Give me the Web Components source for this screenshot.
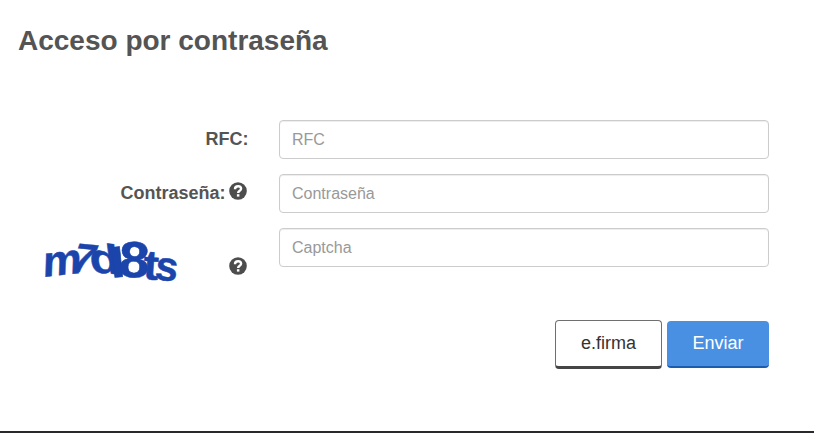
<!DOCTYPE html>
<html lang="es">
<head>
<meta charset="utf-8">
<title>Acceso por contraseña</title>
<style>
  body {
    margin: 0;
    background: #fff;
    color: #545454;
    font-family: "Liberation Sans", Arial, sans-serif;
  }
</style>
</head>
<body>
<login-panel></login-panel>
<script>
class HelpIcon extends HTMLElement {
  constructor() {
    super();
    this.attachShadow({ mode: "open" });
  }

  connectedCallback() {
    this.shadowRoot.innerHTML = `
      <style>
        :host { display: block; width: 18px; height: 18px; }
        svg { display: block; }
      </style>
      <svg width="18" height="18" viewBox="0 0 18 18" aria-hidden="true">
        <circle cx="9" cy="9" r="8.8" fill="#4d4d4d"/>
        <path d="M6 7.2C6 5.2 7.2 4.2 9.1 4.2S12.1 5.2 12.1 6.8C12.1 8.9 9.1 8.7 9.1 11.1" fill="none" stroke="#fff" stroke-width="2.4"/>
        <rect x="7.9" y="12.2" width="2.5" height="2.4" fill="#fff"/>
      </svg>
    `;
  }
}

class CaptchaPicture extends HTMLElement {
  constructor() {
    super();
    this.attachShadow({ mode: "open" });
  }

  connectedCallback() {
    this.shadowRoot.innerHTML = `
      <style>
        :host { display: block; width: 160px; height: 65px; }
        svg { display: block; }
        text { font-family: "Liberation Sans", Arial, sans-serif; font-weight: bold; fill: #1b45ab; stroke: #1b45ab; stroke-width: .5; }
      </style>
      <svg width="160" height="65" viewBox="0 0 160 65">
        <text transform="translate(12.5 51) rotate(-6) skewX(-8) scale(1.02 1)" font-size="43">m</text>
        <text transform="translate(38 45) rotate(5) skewX(-15) scale(.98 1)" font-size="41">7</text>
        <text transform="translate(61 46) rotate(5) skewX(12) scale(1.2 1)" font-size="41">d</text>
        <text transform="translate(81 52) rotate(-6) scale(1.35 1)" font-size="42" stroke-width="3">l</text>
        <text transform="translate(88 50.5) rotate(3) scale(1.08 1)" font-size="51" stroke-width="1">8</text>
        <text transform="translate(112.5 53) rotate(4) scale(1.1 1)" font-size="42" stroke-width="1">t</text>
        <text transform="translate(124 53) rotate(7)" font-size="41" stroke-width="1">s</text>
      </svg>
    `;
  }
}

class FormRow extends HTMLElement {
  constructor() {
    super();
    this.attachShadow({ mode: "open" });
  }

  connectedCallback() {
    const placeholder = this.getAttribute("placeholder") || "";
    const type = this.getAttribute("type") || "text";

    this.shadowRoot.innerHTML = `
      <style>
        :host {
          display: grid;
          grid-template-columns: 248.5px 490px;
          column-gap: 30.5px;
          height: 39px;
          margin-bottom: 15px;
        }
        .label {
          display: flex;
          justify-content: flex-end;
          height: 38px;
          align-items: center;
          font-size: 18px;
          font-weight: bold;
        }
        input {
          box-sizing: border-box;
          width: 490px;
          height: 39px;
          margin: 0;
          padding: 6px 12px;
          border: 1px solid #ccc;
          border-radius: 4px;
          box-shadow: inset 0 1px 1px rgba(0, 0, 0, .075);
          background: #fff;
          font: 16px "Liberation Sans", Arial, sans-serif;
        }
        input::placeholder { color: #999; opacity: 1; }
      </style>
      <div class="label"><slot></slot></div>
      <input type="${type}" placeholder="${placeholder}">
    `;
  }
}

class FormButton extends HTMLElement {
  constructor() {
    super();
    this.attachShadow({ mode: "open" });
  }

  connectedCallback() {
    this.shadowRoot.innerHTML = `
      <style>
        :host { display: block; }
        button {
          display: block;
          box-sizing: border-box;
          width: 107px;
          height: 49px;
          padding: 0 0 1px;
          border: 1px solid #6f6f6f;
          border-bottom: 3px solid #454545;
          border-radius: 4px;
          background: #fff;
          color: #333;
          font: 18px "Liberation Sans", Arial, sans-serif;
        }
        :host([primary]) button {
          width: 102px;
          height: 47px;
          border: 0;
          border-bottom: 2px solid #1b5cae;
          background: #4a90e2;
          color: #fff;
        }
      </style>
      <button type="button"><slot></slot></button>
    `;
  }
}

class LoginPanel extends HTMLElement {
  constructor() {
    super();
    this.attachShadow({ mode: "open" });
  }

  connectedCallback() {
    this.shadowRoot.innerHTML = `
      <style>
        :host {
          display: flex;
          flex-direction: column;
          box-sizing: border-box;
          height: 433px;
          overflow: hidden;
          border-bottom: 2px solid #29292b;
        }
        h1 {
          margin: 0;
          padding: 24px 0 0 18px;
          height: 96px;
          font-size: 28px;
          line-height: 33px;
          font-weight: bold;
          box-sizing: content-box;
        }
        form { margin: 0; }
        captcha-picture { flex: none; margin: 23px 39px 0 0; }
        help-icon { margin: -4px 2px 0 3px; }
        .captcha-help { margin: 37px 2px 0 0; }
        .buttons {
          display: flex;
          align-items: center;
          justify-content: flex-end;
          gap: 5px;
          padding: 38px 45px 0 0;
        }
      </style>
      <h1>Acceso por contraseña</h1>
      <form>
        <form-row placeholder="RFC">RFC:</form-row>
        <form-row placeholder="Contraseña" type="password">Contraseña:<help-icon></help-icon></form-row>
        <form-row placeholder="Captcha"><captcha-picture></captcha-picture><help-icon class="captcha-help"></help-icon></form-row>
        <div class="buttons">
          <form-button>e.firma</form-button>
          <form-button primary>Enviar</form-button>
        </div>
      </form>
    `;
  }
}

customElements.define("help-icon", HelpIcon);
customElements.define("captcha-picture", CaptchaPicture);
customElements.define("form-row", FormRow);
customElements.define("form-button", FormButton);
customElements.define("login-panel", LoginPanel);
</script>
</body>
</html>
